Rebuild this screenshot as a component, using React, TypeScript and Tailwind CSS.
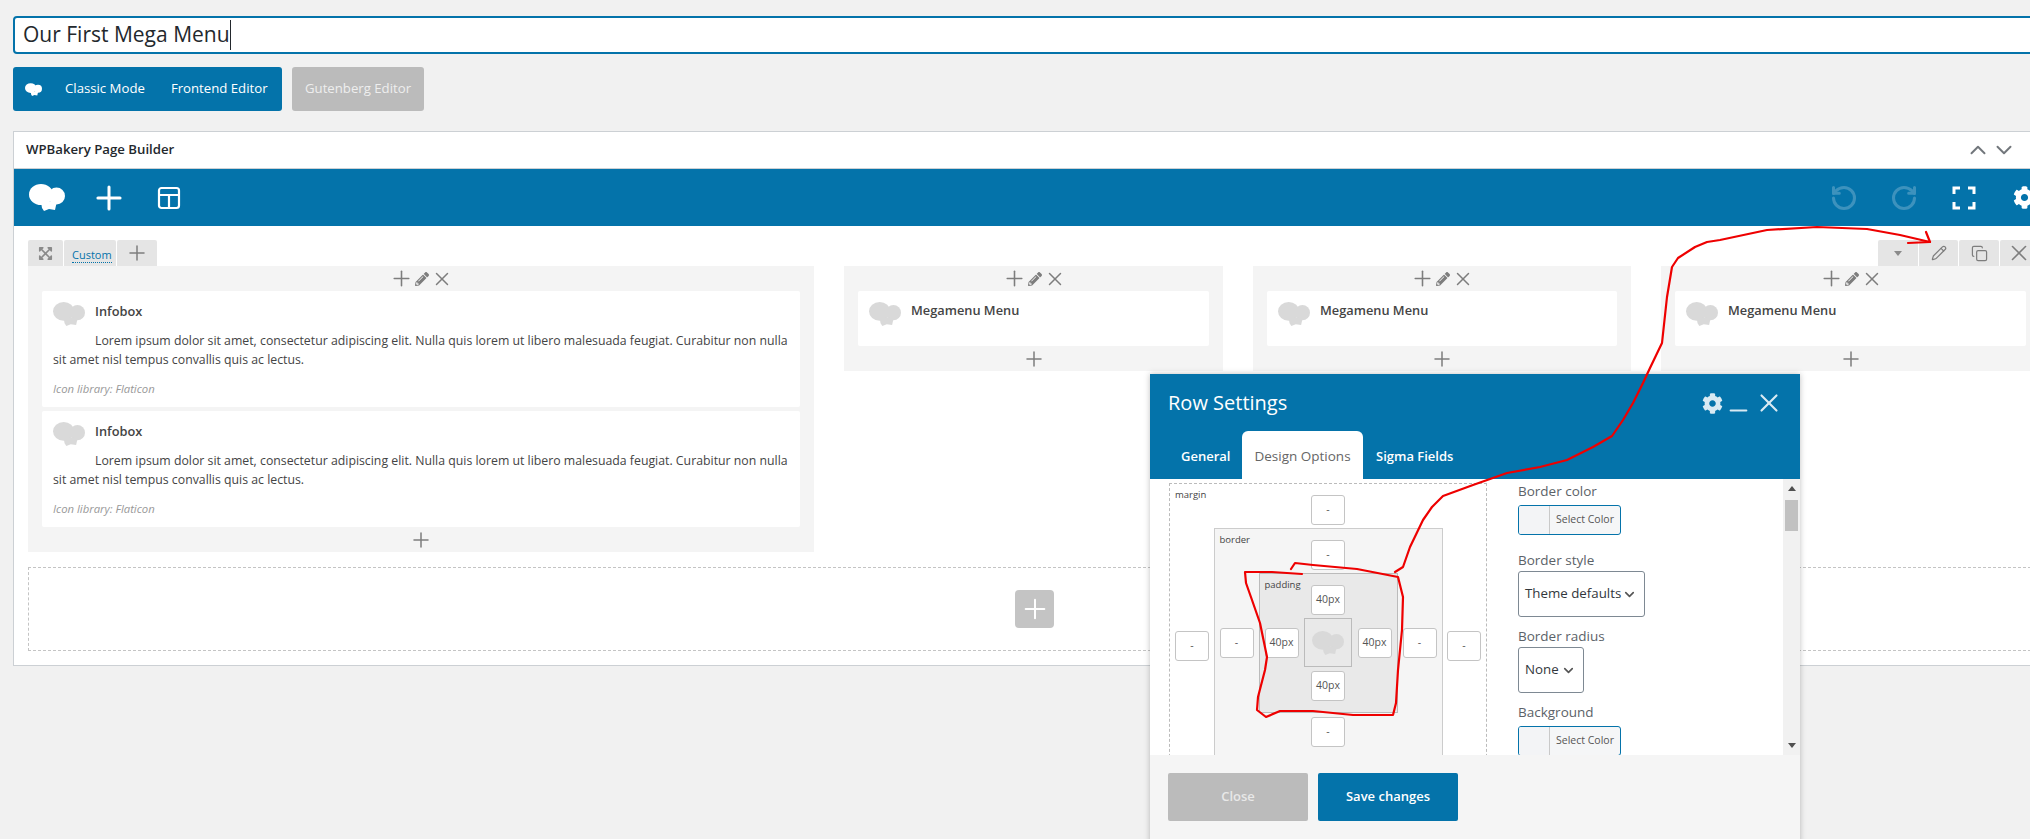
import { ChevronDown, ChevronUp, Copy, Minus, Pencil, Plus, RotateCcw, RotateCw, X } from 'lucide-react';
import { FaCog, FaExpandArrowsAlt, FaPencilAlt } from 'react-icons/fa';

const lorem =
  'Lorem ipsum dolor sit amet, consectetur adipiscing elit. Nulla quis lorem ut libero malesuada feugiat. Curabitur non nulla sit amet nisl tempus convallis quis ac lectus.';

// WPBakery cloud mark
const Logo = ({ className }: { className: string }) => (
  <svg viewBox="0 0 36 27" className={className} fill="currentColor">
    <ellipse cx="12" cy="10.5" rx="12" ry="10.5" />
    <ellipse cx="27.5" cy="12" rx="8.5" ry="8.5" />
    <path d="M12 18 L28 17 L26 26 L20 25 L15 27 L13 24 Z" />
  </svg>
);

const ColumnControls = () => (
  <div className="h-[25px] flex items-center justify-center text-[#7d7d7d]">
    <Plus className="w-[25px] h-[25px]" strokeWidth={1.5} />
    <FaPencilAlt className="w-[14px] h-[14px] ml-px" />
    <X className="w-[22px] h-[22px] ml-[2px]" strokeWidth={1.6} />
  </div>
);

const AddBelow = () => (
  <div className="h-[25px] flex items-center justify-center text-[#7d7d7d]">
    <Plus className="w-[24px] h-[24px]" strokeWidth={1.5} />
  </div>
);

const Infobox = () => (
  <div className="bg-white rounded-[2px] h-[116px] pl-[11px] pr-[10px] pt-[10px] relative">
    <Logo className="absolute left-[11px] top-[11px] w-[32px] h-[24px] text-[#d9d9d9]" />
    <div className="pl-[42px] text-[12.8px] leading-[20px] font-semibold text-[#444]">Infobox</div>
    <p className="mt-[10px] indent-[42px] text-[12.3px] leading-[19px] text-[#444]">{lorem}</p>
    <div className="mt-[13px] text-[11.3px] leading-[14px] italic text-[#999]">Icon library: Flaticon</div>
  </div>
);

const MenuColumn = ({ width }: { width: string }) => (
  <div className={`${width} shrink-0 bg-[#f4f4f4] px-[14px] h-[105px]`}>
    <ColumnControls />
    <div className="bg-white rounded-[2px] h-[55px] pl-[11px] pt-[9px] flex items-start">
      <Logo className="w-[32px] h-[24px] mt-[2px] text-[#d9d9d9] shrink-0" />
      <div className="ml-[10px] text-[12.8px] leading-[20px] font-semibold text-[#444]">Megamenu Menu</div>
    </div>
    <AddBelow />
  </div>
);

const BoxInput = ({ value = '-' }: { value?: string }) => (
  <div className="w-[34px] h-[30px] shrink-0 bg-white border border-[#c4c4c4] rounded-[3px] flex items-center justify-center text-[10.5px] text-[#555]">
    {value}
  </div>
);

const ColorButton = () => (
  <div className="w-[103px] h-[30px] border border-[#0473aa] rounded-[3px] flex bg-[#f5f6f7] overflow-hidden shrink-0">
    <div className="w-[31px] bg-[#f3f4f6] border-r border-[#c9c9c9]" />
    <div className="flex-1 flex items-center justify-center text-[10.5px] text-[#555]">Select Color</div>
  </div>
);

const SelectBox = ({ label, width }: { label: string; width: string }) => (
  <div className={`${width} h-[46px] border border-[#7e8993] rounded-[3px] flex items-center justify-between pl-[6px] pr-[7px] text-[13.3px] whitespace-nowrap text-[#32373c]`}>
    <span>{label}</span>
    <ChevronDown className="w-[15px] h-[15px] shrink-0 text-[#555]" strokeWidth={2.6} />
  </div>
);

const FieldLabel = ({ children, className }: { children: string; className: string }) => (
  <div className={`${className} text-[13.5px] leading-[20px] text-[#5b6268]`}>{children}</div>
);

const RowSettings = () => (
  <div className="absolute left-[1150px] top-[374px] w-[650px] h-[490px] flex flex-col shadow-[0_0_6px_rgba(0,0,0,0.25)] bg-white">
    <div className="h-[105px] bg-[#0473aa] relative shrink-0">
      <div className="absolute left-[18px] top-[15px] text-[20px] leading-[28px] text-white">Row Settings</div>
      <div className="absolute left-[552px] top-[14px] h-[30px] flex items-center text-[#d9eaf3]">
        <FaCog className="w-[21px] h-[21px]" />
        <Minus className="w-[27px] h-[27px] ml-[2px] mt-[14px]" strokeWidth={1.8} />
        <X className="w-[30px] h-[30px] ml-[2px]" strokeWidth={1.7} />
      </div>
      <div className="absolute left-0 bottom-0 h-[48px] flex text-[13px] font-semibold text-white">
        <div className="w-[92px] pl-[31px] pt-[15px] leading-[20px]">General</div>
        <div className="w-[121px] bg-white rounded-t-[6px] text-[13.5px] text-[#666] font-normal text-center pt-[15px] leading-[20px]">Design Options</div>
        <div className="pl-[13px] pt-[15px] leading-[20px]">Sigma Fields</div>
      </div>
    </div>

    <div className="h-[276px] shrink-0 flex overflow-hidden relative">
      <div className="w-[368px] shrink-0 pl-[19px] pt-[4px]">
        {/* margin / border / padding box model */}
        <div className="relative w-[318px] border border-dashed border-[#bbb] flex flex-col items-center pt-[11px] pb-[12px]">
          <span className="absolute left-[5px] top-[4px] text-[9.5px] leading-[14px] text-[#444]">margin</span>
          <BoxInput />
          <div className="mt-[3px] w-full px-[5px] flex items-center justify-between">
            <BoxInput />
            <div className="relative w-[229px] bg-[#f5f5f5] border border-[#ccc] flex flex-col items-center pt-[11px] pb-[16px]">
              <span className="absolute left-[5px] top-[4px] text-[9.5px] leading-[14px] text-[#444]">border</span>
              <BoxInput />
              <div className="mt-[3px] w-full px-[5px] flex items-center justify-between">
                <BoxInput />
                <div className="relative w-[139px] bg-[#e9e9e9] border border-[#bbb] flex flex-col items-center pt-[11px] pb-[11px]">
                  <span className="absolute left-[5px] top-[4px] text-[9.5px] leading-[14px] text-[#444]">padding</span>
                  <BoxInput value="40px" />
                  <div className="mt-[3px] w-full px-[5px] flex items-center justify-between">
                    <BoxInput value="40px" />
                    <div className="w-[48px] h-[49px] border border-[#bbb] flex items-center justify-center">
                      <Logo className="w-[32px] h-[24px] text-[#d9d9d9]" />
                    </div>
                    <BoxInput value="40px" />
                  </div>
                  <div className="mt-[4px]">
                    <BoxInput value="40px" />
                  </div>
                </div>
                <BoxInput />
              </div>
              <div className="mt-[4px]">
                <BoxInput />
              </div>
            </div>
            <BoxInput />
          </div>
        </div>
      </div>

      <div className="flex-1 pt-[2px]">
        <FieldLabel className="">Border color</FieldLabel>
        <div className="mt-[4px]">
          <ColorButton />
        </div>
        <FieldLabel className="mt-[15px]">Border style</FieldLabel>
        <div className="mt-[1px]">
          <SelectBox label="Theme defaults" width="w-[127px]" />
        </div>
        <FieldLabel className="mt-[9px]">Border radius</FieldLabel>
        <div className="mt-[1px]">
          <SelectBox label="None" width="w-[66px]" />
        </div>
        <FieldLabel className="mt-[9px]">Background</FieldLabel>
        <div className="mt-[4px]">
          <ColorButton />
        </div>
      </div>

      <div className="w-[17px] shrink-0 bg-[#f1f1f1] flex flex-col items-center">
        <svg viewBox="0 0 8 5" className="w-[8px] h-[5px] mt-[7px] text-[#505050]" fill="currentColor">
          <polygon points="4,0 8,5 0,5" />
        </svg>
        <div className="w-[13px] h-[31px] mt-[9px] bg-[#c1c1c1]" />
        <div className="flex-1" />
        <svg viewBox="0 0 8 5" className="w-[8px] h-[5px] mb-[7px] text-[#505050]" fill="currentColor">
          <polygon points="0,0 8,0 4,5" />
        </svg>
      </div>
    </div>

    <div className="flex-1 bg-[#f5f5f5] pl-[18px] pt-[18px] flex items-start gap-[10px]">
      <div className="w-[140px] h-[48px] rounded-[2px] bg-[#bbb] text-[#e8e8e8] text-[13px] font-semibold flex items-center justify-center">Close</div>
      <div className="w-[140px] h-[48px] rounded-[2px] bg-[#0473aa] text-white text-[13px] font-semibold flex items-center justify-center">Save changes</div>
    </div>
  </div>
);

// hand-drawn annotation over the screenshot
const Annotation = () => (
  <svg viewBox="0 0 2030 839" className="absolute inset-0 w-[2030px] h-[839px] pointer-events-none" fill="none" stroke="#ee0000" strokeWidth={2.2} strokeLinejoin="round" strokeLinecap="round">
    <path d="M1302 574 L1272 572 L1245 572 L1246 583 L1252 600 L1260 623 L1267 657 L1265 670 L1258 697 L1257 710 L1266 717 L1280 711 L1313 711 L1353 715 L1393 715 L1396 703 L1398 670 L1402 630 L1403 597 L1398 577 L1357 569 L1313 565 L1295 563 L1291 569" />
    <path d="M1395 572 L1403 567 L1410 547 L1423 520 L1432 507 L1443 496 L1473 485 L1507 473 L1540 467 L1567 460 L1593 447 L1612 436 L1623 420 L1633 403 L1643 383 L1650 368 L1662 343 L1667 297 L1672 267 L1678 258 L1695 247 L1707 242 L1720 240 L1767 230 L1817 227 L1867 229 L1900 235 L1930 242" />
    <path d="M1908 243 L1930 242 L1926 232" />
  </svg>
);

export default function App() {
  return (
    <div className="relative w-[2030px] h-[839px] overflow-hidden bg-[#f1f1f1] font-['Open_Sans',sans-serif] pl-[13px] pt-[16px]">
      <div className="w-[2060px] h-[38px] bg-white border-2 border-[#0473aa] rounded-[4px] flex items-center pl-[8px] text-[21px] text-[#23282d]">
        <span>Our First Mega Menu</span>
        <span className="w-px h-[30px] bg-[#23282d]" />
      </div>

      <div className="mt-[13px] flex gap-[10px]">
        <div className="w-[269px] h-[44px] rounded-[3px] bg-[#0473aa] text-white text-[13.2px] flex items-center pl-[12px]">
          <Logo className="w-[17px] h-[13px]" />
          <span className="ml-[23px]">Classic Mode</span>
          <span className="ml-[26px]">Frontend Editor</span>
        </div>
        <div className="w-[132px] h-[44px] rounded-[3px] bg-[#bbb] text-[#eee] text-[13.2px] flex items-center justify-center">Gutenberg Editor</div>
      </div>

      <div className="mt-[20px] w-[2042px] h-[535px] bg-white border-t border-b border-l border-[#ccd0d4]">
        <div className="h-[36px] flex items-center justify-between pl-[12px] pr-[38px] text-[13.2px] font-semibold text-[#23282d]">
          <span>WPBakery Page Builder</span>
          <div className="flex items-center text-[#72777c]">
            <ChevronUp className="w-[26px] h-[26px]" strokeWidth={1.8} />
            <ChevronDown className="w-[26px] h-[26px]" strokeWidth={1.8} />
          </div>
        </div>

        <div className="h-[58px] bg-[#0473aa] border-t border-[#ccd0d4] flex items-center justify-between pl-[15px] pr-[19px] text-white">
          <div className="flex items-center">
            <Logo className="w-[36px] h-[27px]" />
            <Plus className="w-[38px] h-[38px] ml-[25px]" strokeWidth={1.9} />
            <svg viewBox="0 0 24 24" className="w-[24px] h-[24px] ml-[29px]" fill="none" stroke="currentColor" strokeWidth={2.2}>
              <rect x="2" y="2" width="20" height="20" rx="2.5" />
              <path d="M2 9 H22 M12 9 V22" />
            </svg>
          </div>
          <div className="flex items-center">
            <RotateCcw className="w-[28px] h-[28px] text-[#3d92bd]" strokeWidth={2.6} />
            <RotateCw className="w-[28px] h-[28px] ml-[32px] text-[#3d92bd]" strokeWidth={2.6} />
            <svg viewBox="0 0 24 24" className="w-[24px] h-[24px] ml-[34px]" fill="none" stroke="currentColor" strokeWidth={3}>
              <path d="M2 8 V2 H8 M16 2 H22 V8 M22 16 V22 H16 M8 22 H2 V16" />
            </svg>
            <FaCog className="w-[23px] h-[23px] ml-[37px]" />
          </div>
        </div>

        <div className="px-[14px] pt-[14px]">
          <div className="h-[26px] flex justify-between">
            <div className="flex gap-px">
              <div className="w-[35px] bg-[#e5e5e5] rounded-t-[2px] flex items-center justify-center text-[#8a8a8a]">
                <FaExpandArrowsAlt className="w-[15px] h-[15px]" />
              </div>
              <div className="w-[52px] bg-[#e5e5e5] rounded-t-[2px] flex items-end pl-[8px] pb-[3px] text-[11px] leading-[14px] text-[#0473aa]">
                <span className="border-b border-dotted border-[#0473aa]">Custom</span>
              </div>
              <div className="w-[40px] bg-[#e5e5e5] rounded-t-[2px] flex items-center justify-center text-[#7d7d7d]">
                <Plus className="w-[24px] h-[24px]" strokeWidth={1.5} />
              </div>
            </div>
            <div className="flex gap-px">
              <div className="w-[40px] bg-[#e5e5e5] rounded-t-[2px] flex items-center justify-center">
                <svg viewBox="0 0 8 5" className="w-[8px] h-[5px] text-[#8a8a8a]" fill="currentColor">
                  <polygon points="0,0 8,0 4,5" />
                </svg>
              </div>
              <div className="w-[39px] bg-[#e5e5e5] rounded-t-[2px] flex items-center justify-center text-[#7d7d7d]">
                <Pencil className="w-[16px] h-[16px]" strokeWidth={1.8} />
              </div>
              <div className="w-[40px] bg-[#e5e5e5] rounded-t-[2px] flex items-center justify-center text-[#7d7d7d]">
                <Copy className="w-[17px] h-[17px]" strokeWidth={1.7} />
              </div>
              <div className="w-[41px] bg-[#e5e5e5] rounded-t-[2px] flex items-center justify-start pl-[6px] text-[#7d7d7d]">
                <X className="w-[26px] h-[26px]" strokeWidth={1.5} />
              </div>
            </div>
          </div>

          <div className="flex gap-[30px] items-start">
            <div className="w-[786px] shrink-0 bg-[#f4f4f4] px-[14px]">
              <ColumnControls />
              <div className="flex flex-col gap-[4px]">
                <Infobox />
                <Infobox />
              </div>
              <AddBelow />
            </div>
            <MenuColumn width="w-[379px]" />
            <MenuColumn width="w-[378px]" />
            <MenuColumn width="w-[379px]" />
          </div>

          <div className="mt-[15px] h-[84px] border border-dashed border-[#c4c4c4] flex items-center justify-center">
            <div className="w-[39px] h-[38px] rounded-[4px] bg-[#c4c4c4] flex items-center justify-center text-white">
              <Plus className="w-[32px] h-[32px]" strokeWidth={1.5} />
            </div>
          </div>
        </div>
      </div>

      <RowSettings />
      <Annotation />
    </div>
  );
}
